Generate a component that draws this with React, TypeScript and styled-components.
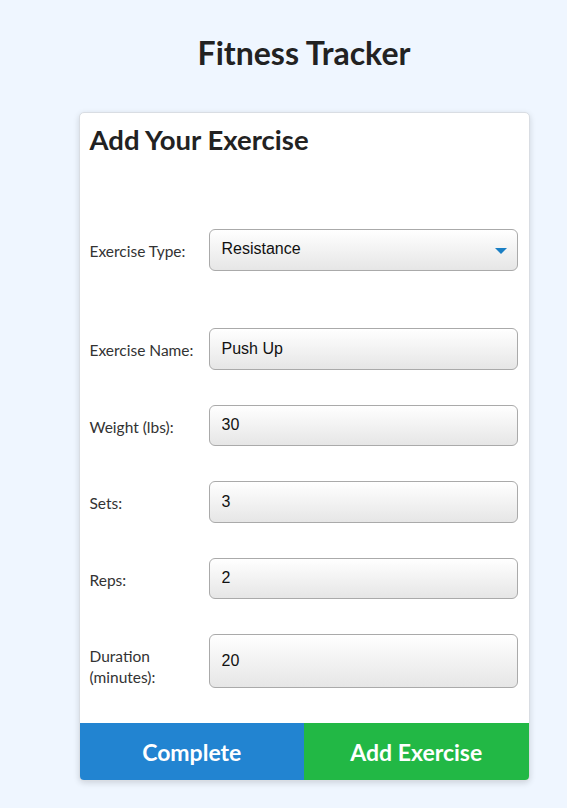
import React from "react";
import styled, { createGlobalStyle } from "styled-components";

const GlobalStyle = createGlobalStyle`
  html, body { margin: 0; padding: 0; }
  body {
    background: #eff6ff;
    font-family: Lato, "Noto Sans", sans-serif;
    color: #222;
  }
  * { box-sizing: border-box; }
`;

const Page = styled.div`
  padding: 33px 0 40px 41px;
  display: flex;
  flex-direction: column;
  align-items: center;
`;

const Title = styled.h1`
  margin: 0 0 39px;
  font-size: 32px;
  line-height: 40px;
  font-weight: 700;
  color: #222;
`;

const Card = styled.div`
  width: 451px;
  background: #fff;
  border: 1px solid #d9dde3;
  border-radius: 5px;
  box-shadow: 0 2px 6px rgba(0, 0, 0, 0.14);
  overflow: hidden;
`;

const CardBody = styled.form`
  padding: 11px 11px 35px 10px;
`;

const CardTitle = styled.h2`
  margin: 0 0 73px;
  font-size: 27.5px;
  line-height: 32px;
  font-weight: 700;
  color: #222;
`;

const Row = styled.div<{ $gap: number }>`
  display: grid;
  grid-template-columns: 119px 1fr;
  align-items: stretch;
  margin-bottom: ${(p) => p.$gap}px;
  &:last-child { margin-bottom: 0; }
`;

const Label = styled.label`
  padding-top: 12px;
  padding-right: 6px;
  font-size: 15.5px;
  line-height: 21px;
  color: #333;
`;

const fieldStyles = `
  width: 100%;
  min-height: 41.5px;
  padding: 0 12px;
  border: 1px solid #aaa;
  border-radius: 6px;
  background: linear-gradient(to bottom, #ffffff 0%, #e6e6e6 100%);
  font-family: "Liberation Sans", Arial, sans-serif;
  font-size: 16px;
  color: #111;
  outline: none;
`;

const Input = styled.input`
  ${fieldStyles}
`;

const SelectBox = styled.div`
  ${fieldStyles}
  min-height: 42px;
  display: flex;
  align-items: center;
  justify-content: space-between;
  padding-bottom: 2px;
  padding-right: 10px;
`;

const Arrow = styled.span`
  width: 0;
  height: 0;
  border-left: 6px solid transparent;
  border-right: 6px solid transparent;
  border-top: 6px solid #1a7fc4;
  margin-top: 3px;
`;

const Buttons = styled.div`
  display: grid;
  grid-template-columns: 1fr 1fr;
`;

const ActionButton = styled.button<{ $color: string }>`
  height: 57px;
  border: none;
  background: ${(p) => p.$color};
  color: #fff;
  font-family: Lato, "Noto Sans", sans-serif;
  font-size: 23px;
  font-weight: 700;
  cursor: pointer;
`;

const fields = [
  { label: "Exercise Name:", value: "Push Up", gap: 35 },
  { label: "Weight (lbs):", value: "30", gap: 35 },
  { label: "Sets:", value: "3", gap: 35 },
  { label: "Reps:", value: "2", gap: 35 },
  { label: "Duration (minutes):", value: "20", gap: 0 },
];

export default function App() {
  return (
    <>
      <GlobalStyle />
      <Page>
        <Title>Fitness Tracker</Title>
        <Card>
          <CardBody onSubmit={(e) => e.preventDefault()}>
            <CardTitle>Add Your Exercise</CardTitle>
            <Row $gap={57}>
              <Label>Exercise Type:</Label>
              <SelectBox>
                <span>Resistance</span>
                <Arrow />
              </SelectBox>
            </Row>
            {fields.map((f) => (
              <Row key={f.label} $gap={f.gap}>
                <Label>{f.label}</Label>
                <Input defaultValue={f.value} />
              </Row>
            ))}
          </CardBody>
          <Buttons>
            <ActionButton type="button" $color="#2284d1">Complete</ActionButton>
            <ActionButton type="button" $color="#22b845">Add Exercise</ActionButton>
          </Buttons>
        </Card>
      </Page>
    </>
  );
}
